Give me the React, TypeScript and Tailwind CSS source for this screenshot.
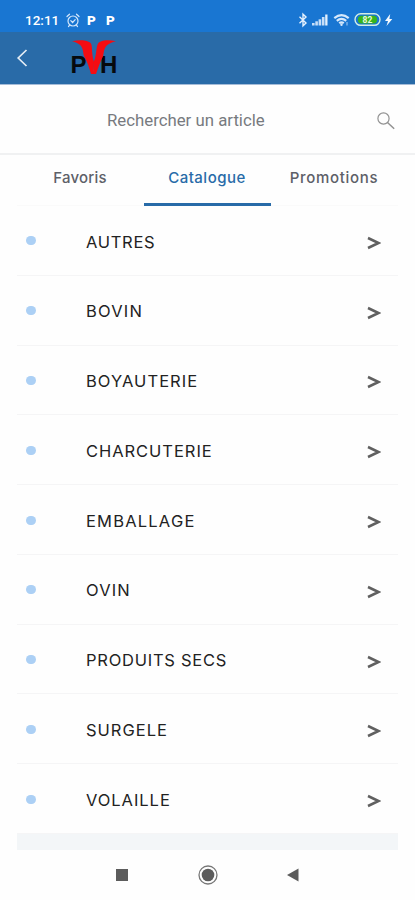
import React, { useState } from 'react';

interface Category {
  name: string;
  tracking: string;
}

const categories: Category[] = [
  { name: 'AUTRES', tracking: 'tracking-[0.7px]' },
  { name: 'BOVIN', tracking: 'tracking-[1.2px]' },
  { name: 'BOYAUTERIE', tracking: 'tracking-[1.05px]' },
  { name: 'CHARCUTERIE', tracking: 'tracking-[0.95px]' },
  { name: 'EMBALLAGE', tracking: 'tracking-[1.2px]' },
  { name: 'OVIN', tracking: 'tracking-[1.1px]' },
  { name: 'PRODUITS SECS', tracking: 'tracking-[0.75px]' },
  { name: 'SURGELE', tracking: 'tracking-[1px]' },
  { name: 'VOLAILLE', tracking: 'tracking-[0.95px]' }
];

const tabs = [
  { name: 'Favoris', tracking: 'tracking-[0.2px]' },
  { name: 'Catalogue', tracking: 'tracking-[0.5px]' },
  { name: 'Promotions', tracking: 'tracking-[0.7px]' }
];

function AlarmIcon() {
  return (
    <svg width="14" height="15" viewBox="0 0 14 15" fill="none" stroke="#d6e8fb" strokeWidth="1.2" strokeLinecap="round">
      <circle cx="7" cy="8" r="5" />
      <path d="M1 3.5 3.5 1.2M13 3.5 10.5 1.2M4.8 7.6 6.6 9.5 9.2 6.6M3.5 12.2 2.5 13.6M10.5 12.2 11.5 13.6" />
    </svg>
  );
}

function StatusIcons() {
  return (
    <svg width="98" height="16" viewBox="0 0 98 16" className="block">
      {/* bluetooth */}
      <path d="M1.5 4.8 8 11 5 13.8V2.2L8 5 1.5 11.2" fill="none" stroke="#e3f0fd" strokeWidth="1.4" />
      {/* signal */}
      <g fill="#c6def8">
        <rect x="14" y="11" width="2.6" height="2.5" />
        <rect x="17.3" y="9.3" width="2.6" height="4.2" />
        <rect x="20.6" y="7.3" width="2.6" height="6.2" />
        <rect x="23.9" y="5" width="2.6" height="8.5" />
        <rect x="27.2" y="2.5" width="2.3" height="11" fill="#e3f0fd" />
      </g>
      {/* wifi */}
      <g fill="none" stroke="#d6e8fb" strokeWidth="2.2">
        <path d="M36.3 6.2Q43.5 0.2 50.7 6.2" />
        <path d="M38.8 8.8Q43.5 5 48.2 8.8" />
        <path d="M41.2 11.2Q43.5 9.5 45.8 11.2" />
      </g>
      <circle cx="43.5" cy="12.8" r="1.2" fill="#d6e8fb" />
      <path d="M49 10v3.5" stroke="#a8cdf5" strokeWidth="1" />
      {/* battery */}
      <rect x="57" y="1.8" width="25" height="11.5" rx="5.7" fill="#1976d2" stroke="#d3eee4" strokeWidth="1.4" />
      <rect x="60" y="3.8" width="19" height="7.6" rx="3.5" fill="#37b51c" />
      <text x="69.5" y="10.8" textAnchor="middle" fill="#e9f9df" fontSize="8.5" fontWeight="700" fontFamily="Roboto, sans-serif">82</text>
      <path d="M92.2 2 87 9H90L88.5 14 94.3 7H91.4Z" fill="#f3f9ff" />
    </svg>
  );
}

function Logo() {
  return (
    <svg width="50" height="42" viewBox="0 0 50 42" className="block">
      <g fontFamily="'Liberation Sans', Arial, sans-serif" fontWeight="700">
        <text x="0.5" y="33" fontSize="24" fill="#06090d">P</text>
        <text x="30" y="33" fontSize="24" fill="#06090d">H</text>
        <text x="18.3" y="34" fontSize="16" fill="#f50c12">V</text>
      </g>
      {/* horns */}
      <path d="M2 1.2C10 -0.5 19 -0.2 21.2 4 22.5 8 21.5 14 24 22L23.5 34H21C19 27 17 21 14 16 12.5 10 14 4 2 1.2Z" fill="#f50c12" />
      <path d="M46 1.2C38 -0.5 30 -0.2 27.8 4 26 8 26.8 14 23.8 22L23.5 34H26C28.5 27 30.5 21 33.2 16 34.5 10 33.5 4 46 1.2Z" fill="#f50c12" />
    </svg>
  );
}

export default function App() {
  const [activeTab, setActiveTab] = useState('Catalogue');

  return (
    <div className="flex h-[900px] w-[415px] flex-col overflow-hidden bg-[#fefefe] font-['Inter',sans-serif]">
      {/* Status bar */}
      <div className="flex h-8 shrink-0 items-center justify-between bg-[#1976d2] pt-2 pr-[19px] pl-[25px] text-white">
        <div className="flex items-center font-['Roboto',sans-serif]">
          <span className="w-[41px] text-[13.5px] font-medium">12:11</span>
          <AlarmIcon />
          <span className="ml-[7px] w-[19px] text-[13.5px] leading-4 font-black">P</span>
          <span className="text-[13.5px] leading-4 font-black">P</span>
        </div>
        <StatusIcons />
      </div>

      {/* Header */}
      <header className="flex h-[52px] shrink-0 items-start bg-[#296ba8] pt-2 pl-4">
        <button className="mt-2 w-[54px]" aria-label="Retour">
          <svg width="12" height="20" viewBox="0 0 12 20" fill="none" stroke="#e4edf5" strokeWidth="1.7">
            <path d="M10.5 2 2.2 10 10.5 18" />
          </svg>
        </button>
        <Logo />
      </header>

      {/* Search */}
      <div className="flex h-[71px] shrink-0 items-center border-t border-b-2 border-t-[#a5bcd8] border-b-[#f0f1f2] pt-[3px] pr-5 pl-[107px]">
        <input
          type="text"
          placeholder="Rechercher un article"
          className="min-w-0 flex-1 font-['Roboto',sans-serif] text-[16.8px] text-gray-700 outline-none placeholder:text-[#777a7f]"
        />
        <svg width="18" height="18" viewBox="0 0 18 18" fill="none" stroke="#929292" strokeWidth="1.2">
          <circle cx="6.5" cy="6.5" r="5.6" />
          <path d="m10.5 10.5 6.7 6.3" strokeWidth="1.5" />
        </svg>
      </div>

      {/* Tabs */}
      <nav className="mx-[17px] grid h-[51px] shrink-0 grid-cols-3">
        {tabs.map((tab) => (
          <button
            key={tab.name}
            onClick={() => setActiveTab(tab.name)}
            className={`flex items-start justify-center pt-[11px] pr-px text-[15px] leading-6 font-medium ${tab.tracking} ${
              activeTab === tab.name
                ? 'border-b-[3px] border-[#286ba8] text-[#286ba8]'
                : 'border-b border-[#fafafa] text-[#5d6068]'
            }`}
          >
            {tab.name}
          </button>
        ))}
      </nav>

      {/* Categories */}
      <ul className="mx-[17px] flex h-[628px] shrink-0 flex-col">
        {categories.map((category) => (
          <li key={category.name} className="flex flex-1 items-center border-b border-[#f5f5f6] pt-[3px] pl-[9px]">
            <span className="mb-[2px] h-[9px] w-[10px] rounded-full bg-[#acd0f5]" />
            <span className={`ml-[50px] flex-1 text-[16.5px] whitespace-nowrap text-[#222] ${category.tracking}`}>
              {category.name}
            </span>
            <svg width="14" height="14" viewBox="0 0 14 14" className="mt-[2px] mr-[17px]" fill="none" stroke="#606060" strokeWidth="2.5">
              <path d="M1 2 11.5 7 1 12" />
            </svg>
          </li>
        ))}
      </ul>
      <div className="mx-[17px] h-4 shrink-0 bg-[#f3f6f8]" />

      {/* Navigation bar */}
      <div className="flex h-[50px] shrink-0 items-center pl-[115px]">
        <svg width="185" height="20" viewBox="0 0 185 20" fill="#5c5c5c">
          <rect x="1" y="4" width="12" height="12" />
          <circle cx="93" cy="10" r="9" fill="none" stroke="#777" strokeWidth="1.3" />
          <circle cx="93" cy="10" r="6.3" />
          <path d="M172 10 183.500 3.500V16.500Z" />
        </svg>
      </div>
    </div>
  );
}
